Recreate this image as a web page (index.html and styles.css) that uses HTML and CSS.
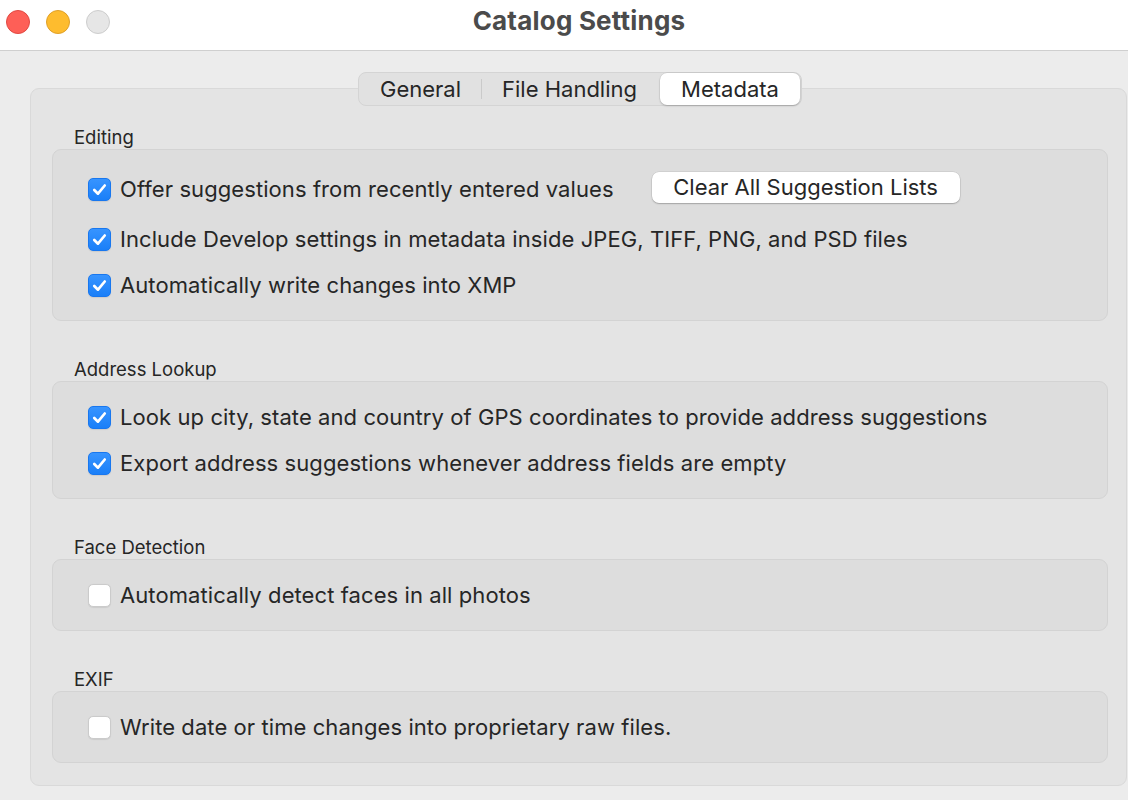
FILE: index.html
```html
<!DOCTYPE html>
<html>
<head>
<meta charset="utf-8">
<link rel="stylesheet" href="styles.css">
</head>
<body>
<div class="titlebar">
  <div class="lights">
    <span class="light red"></span>
    <span class="light yellow"></span>
    <span class="light gray"></span>
  </div>
  <div class="title">Catalog Settings</div>
</div>
<div class="content">
  <div class="panel">
    <div class="tabs">
      <span class="tab">General</span>
      <span class="sep"></span>
      <span class="tab">File Handling</span>
      <span class="tab active">Metadata</span>
    </div>

    <div class="section-label first">Editing</div>
    <div class="group">
      <div class="row tall">
        <span class="cb on"><svg viewBox="0 0 22 22"><path d="M5.5 11.5 L9.4 15.4 L16.5 6.8" /></svg></span>
        <span class="text">Offer suggestions from recently entered values</span>
        <button class="btn">Clear All Suggestion Lists</button>
      </div>
      <div class="row">
        <span class="cb on"><svg viewBox="0 0 22 22"><path d="M5.5 11.5 L9.4 15.4 L16.5 6.8" /></svg></span>
        <span class="text">Include Develop settings in metadata inside JPEG, TIFF, PNG, and PSD files</span>
      </div>
      <div class="row">
        <span class="cb on"><svg viewBox="0 0 22 22"><path d="M5.5 11.5 L9.4 15.4 L16.5 6.8" /></svg></span>
        <span class="text">Automatically write changes into XMP</span>
      </div>
    </div>

    <div class="section-label">Address Lookup</div>
    <div class="group">
      <div class="row">
        <span class="cb on"><svg viewBox="0 0 22 22"><path d="M5.5 11.5 L9.4 15.4 L16.5 6.8" /></svg></span>
        <span class="text">Look up city, state and country of GPS coordinates to provide address suggestions</span>
      </div>
      <div class="row">
        <span class="cb on"><svg viewBox="0 0 22 22"><path d="M5.5 11.5 L9.4 15.4 L16.5 6.8" /></svg></span>
        <span class="text">Export address suggestions whenever address fields are empty</span>
      </div>
    </div>

    <div class="section-label">Face Detection</div>
    <div class="group">
      <div class="row">
        <span class="cb"></span>
        <span class="text">Automatically detect faces in all photos</span>
      </div>
    </div>

    <div class="section-label">EXIF</div>
    <div class="group">
      <div class="row">
        <span class="cb"></span>
        <span class="text">Write date or time changes into proprietary raw files.</span>
      </div>
    </div>
  </div>
</div>
</body>
</html>
```

FILE: styles.css
```css
* { box-sizing: border-box; }
html, body {
  margin: 0;
  padding: 0;
}
body {
  width: 1128px;
  height: 800px;
  overflow: hidden;
  background: #ececec;
  font-family: "Inter", "Liberation Sans", sans-serif;
  color: #262626;
}
.titlebar {
  height: 51px;
  background: #ffffff;
  border-bottom: 1px solid #cfcfcf;
  display: flex;
  align-items: center;
  position: relative;
}
.lights {
  display: flex;
  gap: 16px;
  padding-left: 6px;
  margin-top: -7px;
}
.light {
  width: 24px;
  height: 24px;
  border-radius: 50%;
  display: block;
}
.light.red { background: #fe5f57; border: 1px solid #e14942; }
.light.yellow { background: #febc2e; border: 1px solid #e0a028; }
.light.gray { background: #e6e6e6; border: 1px solid #cdcdcd; }
.title {
  flex: 1;
  text-align: center;
  font-weight: 700;
  font-size: 26px;
  letter-spacing: 0.2px;
  color: #4b4b4b;
  margin-top: -9px;
  padding-right: 80px;
}
.content {
  padding: 37px 0 0 30px;
}
.panel {
  width: 1097px;
  height: 698px;
  background: #e4e4e4;
  border: 1px solid #d9d9d9;
  border-radius: 9px;
  padding: 0 18px 0 21px;
  display: flex;
  flex-direction: column;
}
.tabs {
  align-self: flex-start;
  margin-left: 306px;
  margin-top: -17px;
  height: 34px;
  width: 444px;
  display: flex;
  align-items: center;
  background: #e1e1e1;
  border: 1px solid #d4d4d4;
  border-radius: 8px;
  padding: 0 1px;
  font-size: 22px;
}
.tab {
  height: 32px;
  display: flex;
  align-items: center;
  padding: 0 20px;
  color: #262626;
}
.tab.active {
  margin-left: auto;
  width: 140px;
  justify-content: center;
  background: #ffffff;
  border-radius: 7px;
  box-shadow: 0 1px 2px rgba(0,0,0,0.2), 0 0 0 0.5px rgba(0,0,0,0.08);
}
.sep {
  width: 1px;
  height: 20px;
  background: #cacaca;
}
.section-label {
  font-size: 18.5px;
  line-height: 20px;
  height: 20px;
  margin: 38px 0 2px 22px;
  color: #262626;
}
.section-label.first {
  margin-top: 21px;
}
.group {
  background: #dddddd;
  border: 1px solid #d3d3d3;
  border-radius: 9px;
  padding: 12px 0;
}
.row {
  height: 46px;
  display: flex;
  align-items: center;
  padding-left: 35px;
}
.row.tall { height: 54px; }
.text {
  font-size: 22px;
  letter-spacing: 0.08px;
  margin-left: 9px;
  white-space: nowrap;
}
.cb {
  width: 23px;
  height: 23px;
  border-radius: 5px;
  background: #ffffff;
  border: 1px solid #cbcbcb;
  box-shadow: 0 0.5px 1px rgba(0,0,0,0.08);
  display: flex;
  align-items: center;
  justify-content: center;
  flex-shrink: 0;
}
.cb.on {
  background: linear-gradient(#3794ff, #1a7ff8);
  border: 1px solid #1877ef;
}
.cb svg {
  width: 21px;
  height: 21px;
  fill: none;
  stroke: #ffffff;
  stroke-width: 2.8;
  stroke-linecap: round;
  stroke-linejoin: round;
}
.btn {
  margin-left: 38px;
  height: 31px;
  width: 308px;
  background: #ffffff;
  border: none;
  border-radius: 7px;
  box-shadow: 0 1px 1.5px rgba(0,0,0,0.22), 0 0 0 0.5px rgba(0,0,0,0.1);
  font-family: inherit;
  font-size: 22px;
  color: #262626;
  padding: 0;
  margin-top: -4px;
}
```
